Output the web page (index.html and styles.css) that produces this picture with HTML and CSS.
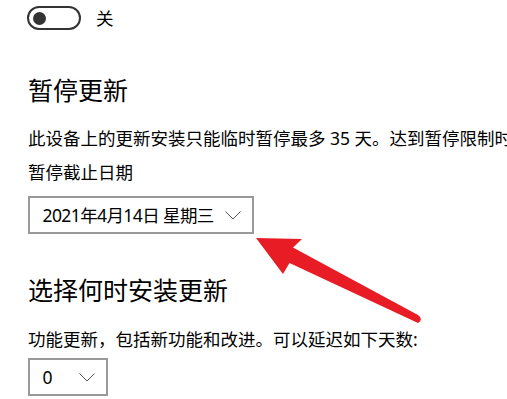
FILE: index.html
```html
<!DOCTYPE html>
<html lang="zh-CN">
<head>
<meta charset="utf-8">
<title>暂停更新</title>
<link rel="stylesheet" href="styles.css">
</head>
<body>
<main class="page">
  <div class="toggle-row">
    <span class="toggle"><span class="knob"></span></span>
    <span class="toggle-label">关</span>
  </div>
  <h2 class="heading h-pause">暂停更新</h2>
  <p class="desc d-pause">此设备上的更新安装只能临时暂停最多 35 天。达到暂停限制时</p>
  <p class="desc d-label">暂停截止日期</p>
  <div class="select select-date">
    <span class="select-text">2021年4月14日 星期三</span>
    <svg class="chev" viewBox="0 0 16 9" width="16" height="9"><polyline points="0.5,0.5 8,8 15.5,0.5" fill="none" stroke="#555" stroke-width="1"/></svg>
  </div>
  <h2 class="heading h-when">选择何时安装更新</h2>
  <p class="desc d-when">功能更新，包括新功能和改进。可以延迟如下天数:</p>
  <div class="select select-days">
    <span class="select-text">0</span>
    <svg class="chev" viewBox="0 0 16 9" width="16" height="9"><polyline points="0.5,0.5 8,8 15.5,0.5" fill="none" stroke="#555" stroke-width="1"/></svg>
  </div>
</main>
<svg class="arrow" viewBox="0 0 507 399" width="507" height="399">
  <path d="M256,238 L302,239 L293,247.5 L418,315 Q424,319.5 418,323 L289.5,263 L283,274 Z" fill="#e81c25"/>
</svg>
</body>
</html>
```

FILE: styles.css
```css
html, body {
  margin: 0;
  padding: 0;
  background: #ffffff;
}
body {
  width: 507px;
  height: 399px;
  overflow: hidden;
  position: relative;
  font-family: "Noto Sans", "Noto Sans CJK SC", sans-serif;
  color: #000;
}
.page {
  padding: 6px 0 0 27px;
  display: flex;
  flex-direction: column;
  align-items: flex-start;
}
.toggle-row {
  display: flex;
  align-items: center;
  height: 24px;
}
.toggle {
  box-sizing: border-box;
  width: 54px;
  height: 24px;
  border: 2.4px solid #333;
  border-radius: 12px;
  display: flex;
  align-items: center;
  padding-left: 3.6px;
}
.knob {
  width: 13px;
  height: 13px;
  border-radius: 50%;
  background: #333;
}
.toggle-label {
  margin-left: 15px;
  font-size: 17.5px;
  line-height: 24px;
}
.heading {
  margin: 0;
  font-size: 25px;
  line-height: 25px;
  font-weight: 400;
  white-space: nowrap;
}
.desc {
  margin: 0;
  font-size: 17.5px;
  line-height: 24px;
  white-space: nowrap;
  padding-left: 1px;
}
.h-pause { margin-top: 48px; padding-left: 1px; }
.d-pause {
  margin-top: 23px;
  width: 479px;
  overflow: hidden;
}
.d-label { margin-top: 10px; }
.select {
  box-sizing: border-box;
  height: 38px;
  border: 2.5px solid #999;
  display: flex;
  align-items: center;
  padding: 0 10.5px 0 13px;
}
.select-date { width: 226px; margin-top: 12px; margin-left: 0.5px; }
.select-days { width: 80px; margin-top: 7.5px; margin-left: 0.5px; }
.select-text {
  font-size: 17.5px;
  line-height: 24px;
  white-space: nowrap;
  letter-spacing: -0.6px;
}
.chev {
  margin-left: auto;
  display: block;
}
.h-when { margin-top: 43.5px; padding-left: 1px; }
.d-when { margin-top: 24px; }
.arrow {
  position: absolute;
  left: 0;
  top: 0;
  pointer-events: none;
}
```
